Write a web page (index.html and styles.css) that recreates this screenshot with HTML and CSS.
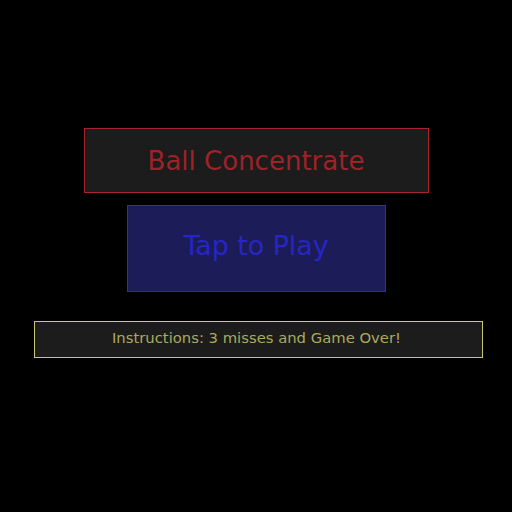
FILE: index.html
```html
<!DOCTYPE html>
<html>
<head>
<meta charset="utf-8">
<link rel="stylesheet" href="styles.css">
</head>
<body>
<main class="screen">
  <div class="title">Ball Concentrate</div>
  <div class="play">Tap to Play</div>
  <div class="instructions">Instructions: 3 misses and Game Over!</div>
</main>
</body>
</html>
```
FILE: styles.css
```css
html, body {
  margin: 0;
  padding: 0;
  background: #000;
  width: 512px;
  height: 512px;
  overflow: hidden;
}
.screen {
  display: flex;
  flex-direction: column;
  align-items: center;
  padding-top: 128px;
  font-family: "DejaVu Sans", Verdana, sans-serif;
}
.title {
  box-sizing: border-box;
  width: 345px;
  height: 65px;
  border: 1px solid #a8232b;
  background: #1c1c1c;
  color: #9e2228;
  font-size: 26px;
  display: flex;
  align-items: center;
  justify-content: center;
}
.play {
  box-sizing: border-box;
  margin-top: 12px;
  width: 259px;
  height: 87px;
  border: 1px solid #2828d8;
  background: #1c1c58;
  color: #2626c4;
  font-size: 26.8px;
  display: flex;
  align-items: center;
  justify-content: center;
  padding-bottom: 6px;
}
.instructions {
  box-sizing: border-box;
  margin-top: 29px;
  margin-left: 5px;
  width: 449px;
  height: 37px;
  border: 1px solid #c8c878;
  background: #1c1c1c;
  color: #aaaa5e;
  font-size: 14.8px;
  display: flex;
  align-items: center;
  justify-content: center;
  padding-right: 4px;
  padding-bottom: 4px;
}
```
